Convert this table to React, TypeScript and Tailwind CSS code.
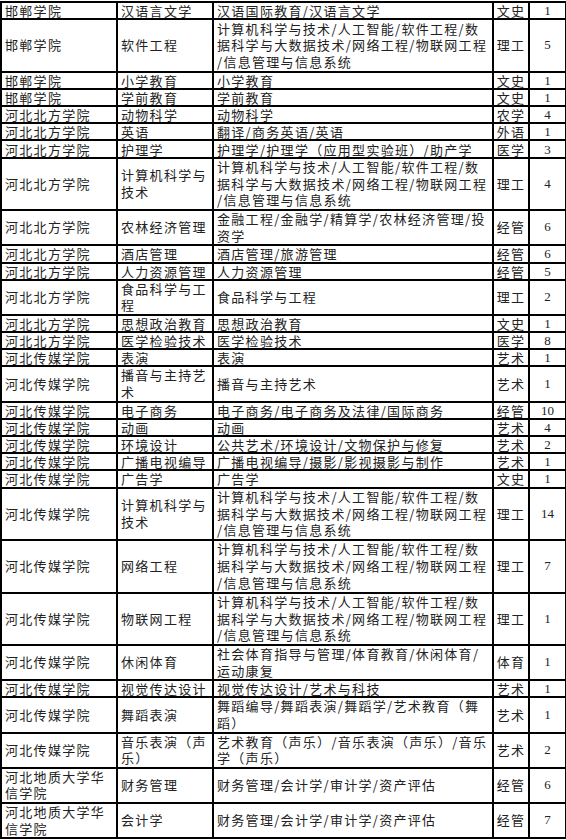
const CS3 =
  "计算机科学与技术/人工智能/软件工程/数\n据科学与大数据技术/网络工程/物联网工程\n/信息管理与信息系统";
const FIN = "财务管理/会计学/审计学/资产评估";

// school, major, covered majors, category, count
const rows: [string, string, string, string, string][] = [
  ["邯郸学院", "汉语言文学", "汉语国际教育/汉语言文学", "文史", "1"],
  ["邯郸学院", "软件工程", CS3, "理工", "5"],
  ["邯郸学院", "小学教育", "小学教育", "文史", "1"],
  ["邯郸学院", "学前教育", "学前教育", "文史", "1"],
  ["河北北方学院", "动物科学", "动物科学", "农学", "4"],
  ["河北北方学院", "英语", "翻译/商务英语/英语", "外语", "1"],
  ["河北北方学院", "护理学", "护理学/护理学（应用型实验班）/助产学", "医学", "3"],
  ["河北北方学院", "计算机科学与\n技术", CS3, "理工", "4"],
  ["河北北方学院", "农林经济管理", "金融工程/金融学/精算学/农林经济管理/投\n资学", "经管", "6"],
  ["河北北方学院", "酒店管理", "酒店管理/旅游管理", "经管", "6"],
  ["河北北方学院", "人力资源管理", "人力资源管理", "经管", "5"],
  ["河北北方学院", "食品科学与工\n程", "食品科学与工程", "理工", "2"],
  ["河北北方学院", "思想政治教育", "思想政治教育", "文史", "1"],
  ["河北北方学院", "医学检验技术", "医学检验技术", "医学", "8"],
  ["河北传媒学院", "表演", "表演", "艺术", "1"],
  ["河北传媒学院", "播音与主持艺\n术", "播音与主持艺术", "艺术", "1"],
  ["河北传媒学院", "电子商务", "电子商务/电子商务及法律/国际商务", "经管", "10"],
  ["河北传媒学院", "动画", "动画", "艺术", "4"],
  ["河北传媒学院", "环境设计", "公共艺术/环境设计/文物保护与修复", "艺术", "2"],
  ["河北传媒学院", "广播电视编导", "广播电视编导/摄影/影视摄影与制作", "艺术", "1"],
  ["河北传媒学院", "广告学", "广告学", "文史", "1"],
  ["河北传媒学院", "计算机科学与\n技术", CS3, "理工", "14"],
  ["河北传媒学院", "网络工程", CS3, "理工", "7"],
  ["河北传媒学院", "物联网工程", CS3, "理工", "1"],
  ["河北传媒学院", "休闲体育", "社会体育指导与管理/体育教育/休闲体育/\n运动康复", "体育", "1"],
  ["河北传媒学院", "视觉传达设计", "视觉传达设计/艺术与科技", "艺术", "1"],
  ["河北传媒学院", "舞蹈表演", "舞蹈编导/舞蹈表演/舞蹈学/艺术教育（舞\n蹈）", "艺术", "1"],
  ["河北传媒学院", "音乐表演（声\n乐）", "艺术教育（声乐）/音乐表演（声乐）/音乐\n学（声乐）", "艺术", "2"],
  ["河北地质大学华\n信学院", "财务管理", FIN, "经管", "6"],
  ["河北地质大学华\n信学院", "会计学", FIN, "经管", "7"],
];

const heights: Record<number, string> = {
  1: "h-[17.2px]",
  2: "h-[35.2px]",
  3: "h-[52.5px]",
};

export default function App() {
  return (
    <div className="w-[566px] h-[840px] overflow-hidden bg-white pt-px text-[#222]">
      <table className="w-[565px] table-fixed border-collapse border-2 border-black text-[13px] font-['Noto_Sans_CJK_SC',sans-serif]">
        <colgroup>
          <col className="w-[116px]" />
          <col className="w-[96px]" />
          <col className="w-[280px]" />
          <col className="w-[36px]" />
          <col className="w-[37px]" />
        </colgroup>
        <tbody>
          {rows.map((r, i) => {
            const lines = Math.max(...r.map((c) => c.split("\n").length));
            const lead = lines === 1 ? "leading-[15px]" : "leading-[16.6px]";
            const cell = `border-2 border-black py-0 align-middle whitespace-pre tracking-[1.3px] ${lead}`;
            return (
              <tr key={i} className={heights[lines]}>
                <td className={`${cell} px-[3px]`}>{r[0]}</td>
                <td className={`${cell} px-[3px]`}>{r[1]}</td>
                <td className={`${cell} px-[3px]`}>{r[2]}</td>
                <td className={`${cell} px-0 text-center`}>{r[3]}</td>
                <td className={`${cell} px-0 text-center tracking-normal font-['Liberation_Serif',serif]`}>
                  {r[4]}
                </td>
              </tr>
            );
          })}
        </tbody>
      </table>
    </div>
  );
}
